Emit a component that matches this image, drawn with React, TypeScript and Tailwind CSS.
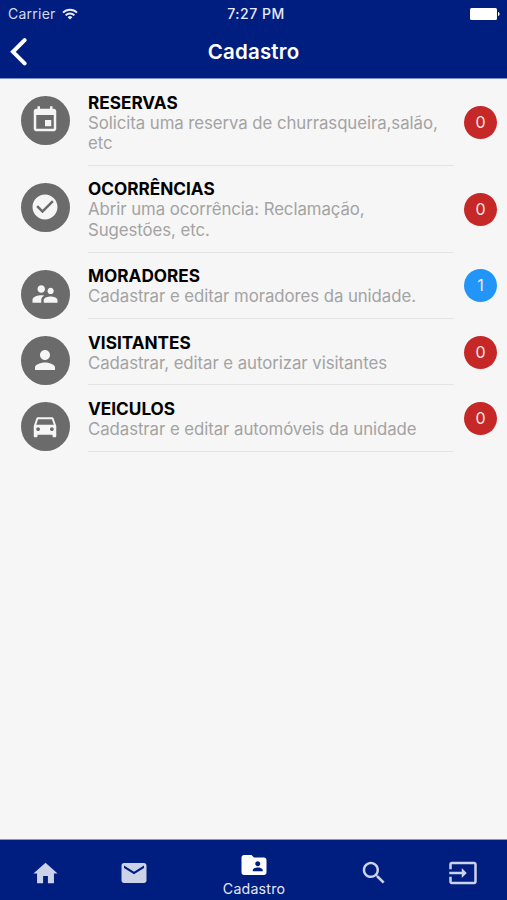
import type { ReactNode } from "react";

function Glyph({ d, className }: { d: string; className: string }) {
  return (
    <svg viewBox="0 0 24 24" fill="currentColor" className={className}>
      <path d={d} />
    </svg>
  );
}

const glyphs = {
  event:
    "M17 12h-5v5h5v-5zM16 1v2H8V1H6v2H5c-1.110 0-1.990.9-1.990 2L3 19c0 1.100.89 2 2 2h14c1.100 0 2-.9 2-2V5c0-1.100-.9-2-2-2h-1V1h-2zm3 18H5V8h14v11z",
  check:
    "M12 2C6.480 2 2 6.480 2 12s4.480 10 10 10 10-4.480 10-10S17.520 2 12 2zm-2 15l-5-5 1.410-1.410L10 14.170l7.590-7.590L19 8l-9 9z",
  people:
    "M16.500 12c1.380 0 2.490-1.120 2.490-2.500S17.880 7 16.500 7C15.120 7 14 8.120 14 9.500s1.120 2.500 2.500 2.500zM9 11c1.660 0 2.990-1.340 2.990-3S10.660 5 9 5C7.340 5 6 6.340 6 8s1.340 3 3 3zm7.500 3c-1.830 0-5.500.92-5.500 2.750V19h11v-2.250c0-1.830-3.670-2.750-5.500-2.750zM9 13c-2.330 0-7 1.170-7 3.500V19h7v-2.250c0-.85.33-2.340 2.370-3.470C10.500 13.100 9.660 13 9 13z",
  person:
    "M12 12c2.210 0 4-1.790 4-4s-1.790-4-4-4-4 1.790-4 4 1.790 4 4 4zm0 2c-2.670 0-8 1.340-8 4v2h16v-2c0-2.660-5.330-4-8-4z",
  car: "M18.920 6.010C18.720 5.420 18.160 5 17.500 5h-11c-.66 0-1.210.42-1.420 1.010L3 12v8c0 .55.45 1 1 1h1c.55 0 1-.45 1-1v-1h12v1c0 .55.45 1 1 1h1c.55 0 1-.45 1-1v-8l-2.080-5.990zM6.500 16c-.83 0-1.500-.67-1.500-1.500S5.670 13 6.500 13s1.500.67 1.500 1.500S7.330 16 6.500 16zm11 0c-.83 0-1.500-.67-1.500-1.500s.67-1.500 1.500-1.500 1.500.67 1.500 1.500-.67 1.500-1.500 1.500zM5 11l1.500-4.500h11L19 11H5z",
  home: "M10 20v-6h4v6h5v-8h3L12 3 2 12h3v8z",
  mail: "M20 4H4c-1.100 0-1.990.9-1.990 2L2 18c0 1.100.9 2 2 2h16c1.100 0 2-.9 2-2V6c0-1.100-.9-2-2-2zm0 4l-8 5-8-5V6l8 5 8-5v2z",
  folder:
    "M20 6h-8l-2-2H4c-1.100 0-1.990.9-1.990 2L2 18c0 1.100.9 2 2 2h16c1.100 0 2-.9 2-2V8c0-1.100-.9-2-2-2zm-5 3c1.100 0 2 .9 2 2s-.9 2-2 2-2-.9-2-2 .9-2 2-2zm4 8h-8v-1c0-1.330 2.670-2 4-2s4 .67 4 2v1z",
  search:
    "M15.500 14h-.79l-.28-.27C15.410 12.590 16 11.110 16 9.500 16 5.910 13.090 3 9.500 3S3 5.910 3 9.500 5.910 16 9.500 16c1.610 0 3.090-.59 4.230-1.570l.27.28v.79l5 4.990L20.490 19l-4.990-5zm-6 0C7.010 14 5 11.990 5 9.500S7.010 5 9.500 5 14 7.010 14 9.500 11.990 14 9.500 14z",
  input:
    "M21 3.010H3c-1.100 0-2 .9-2 2V9h2V4.990h18v14.030H3V15H1v4.010c0 1.100.9 1.980 2 1.980h18c1.100 0 2-.88 2-1.980v-14c0-1.110-.9-2-2-2zM11 16l4-4-4-4v3H1v2h10v3z",
};

interface Entry {
  glyph: string;
  title: string;
  text: string;
  count: number;
  height: string;
}

const entries: Entry[] = [
  { glyph: glyphs.event, title: "RESERVAS", text: "Solicita uma reserva de churrasqueira,salão, etc", count: 0, height: "h-[86.8px]" },
  { glyph: glyphs.check, title: "OCORRÊNCIAS", text: "Abrir uma ocorrência: Reclamação, Sugestões, etc.", count: 0, height: "h-[86.8px]" },
  { glyph: glyphs.people, title: "MORADORES", text: "Cadastrar e editar moradores da unidade.", count: 1, height: "h-[66.4px]" },
  { glyph: glyphs.person, title: "VISITANTES", text: "Cadastrar, editar e autorizar visitantes", count: 0, height: "h-[66.4px]" },
  { glyph: glyphs.car, title: "VEICULOS", text: "Cadastrar e editar automóveis da unidade", count: 0, height: "h-[66.4px]" },
];

function StatusBar() {
  return (
    <div className="grid h-[27px] grid-cols-3 items-center pl-2 pr-[7px] text-[14px] text-[#d5daef]">
      <div className="flex items-center gap-[6px]">
        <span className="tracking-[0.25px]">Carrier</span>
        <svg viewBox="0 0 16 12" className="h-3 w-4" fill="none" stroke="#e8ebf7" strokeWidth="1.9">
          <path d="M1 4.6a10 10 0 0 1 14 0" />
          <path d="M3.6 7.3a6.2 6.2 0 0 1 8.8 0" />
          <path d="M8 11.6 5.6 9.2a3.4 3.4 0 0 1 4.8 0z" fill="#e8ebf7" stroke="none" />
        </svg>
      </div>
      <span className="pl-[4px] text-center font-medium tracking-[0.5px] text-[#e8ebf7]">7:27 PM</span>
      <svg viewBox="0 0 30 12" className="h-3 w-[30px] justify-self-end" fill="#ffffff">
        <rect width="27" height="12" rx="1.5" />
        <path d="M28 4c2 .4 2 3.600 0 4z" />
      </svg>
    </div>
  );
}

function Row({ glyph, title, text, count, height }: Entry) {
  return (
    <li className={`flex ${height} pl-[20.5px] pr-[10px]`}>
      <span className="mt-[17px] flex size-[49px] shrink-0 items-center justify-center rounded-full bg-[#6b6b6b] pb-[1px]">
        <Glyph d={glyph} className="size-[30px] text-[#f5f5f5]" />
      </span>
      <div className="ml-[18.5px] w-[366px] border-b border-[#e4e4e4] pt-[12.6px]">
        <h2 className="text-[17.2px] leading-[21px] font-bold text-black">{title}</h2>
        <p className="text-[16.8px] leading-[20.7px] tracking-[-0.06px] text-[#a3a3a3]">{text}</p>
      </div>
      <span
        className={`ml-auto flex size-[33px] shrink-0 items-center justify-center self-center rounded-full pb-[1px] text-[16px] text-[#f8e4e4] ${
          count > 0 ? "bg-[#2196f8]" : "bg-[#c62828]"
        }`}
      >
        {count}
      </span>
    </li>
  );
}

function Tab({ children }: { children: ReactNode }) {
  return (
    <button className="flex w-[89px] items-center justify-center pt-[6px] pl-[1px] text-[#ccd2e8]">{children}</button>
  );
}

export default function App() {
  return (
    <div className="flex h-[900px] w-[507px] flex-col overflow-hidden bg-[#f6f6f6] font-['Inter','Liberation_Sans',sans-serif]">
      <header className="h-[79px] shrink-0 border-b border-[#7e8fc6] bg-[#001e80]">
        <StatusBar />
        <div className="grid h-[50px] grid-cols-[1fr_auto_1fr] items-center pl-[10px] pr-[10px]">
          <svg viewBox="0 0 17 28" className="h-7 w-[17px]" fill="none" stroke="#ffffff" strokeWidth="4" strokeLinecap="round" strokeLinejoin="miter">
            <path d="M14.600 2.200 3 13.800l11.600 11.600" />
          </svg>
          <h1 className="text-[20.5px] font-semibold tracking-[0.2px] text-white">Cadastro</h1>
        </div>
      </header>
      <ul className="flex-1">
        {entries.map((entry) => (
          <Row key={entry.title} {...entry} />
        ))}
      </ul>
      <nav className="flex h-[60px] shrink-0 bg-[#001e80] shadow-[0_-1px_0_#8a98bb]">
        <Tab>
          <Glyph d={glyphs.home} className="size-[29px]" />
        </Tab>
        <Tab>
          <Glyph d={glyphs.mail} className="size-[30px]" />
        </Tab>
        <button className="flex flex-1 flex-col items-center pt-[10px] pl-[1px]">
          <Glyph d={glyphs.folder} className="size-[30px] text-white" />
          <span className="text-[14.2px] leading-[18px] tracking-[0.2px] text-[#e3e7f5]">Cadastro</span>
        </button>
        <Tab>
          <Glyph d={glyphs.search} className="size-[30px]" />
        </Tab>
        <Tab>
          <Glyph d={glyphs.input} className="size-[30px]" />
        </Tab>
      </nav>
    </div>
  );
}
